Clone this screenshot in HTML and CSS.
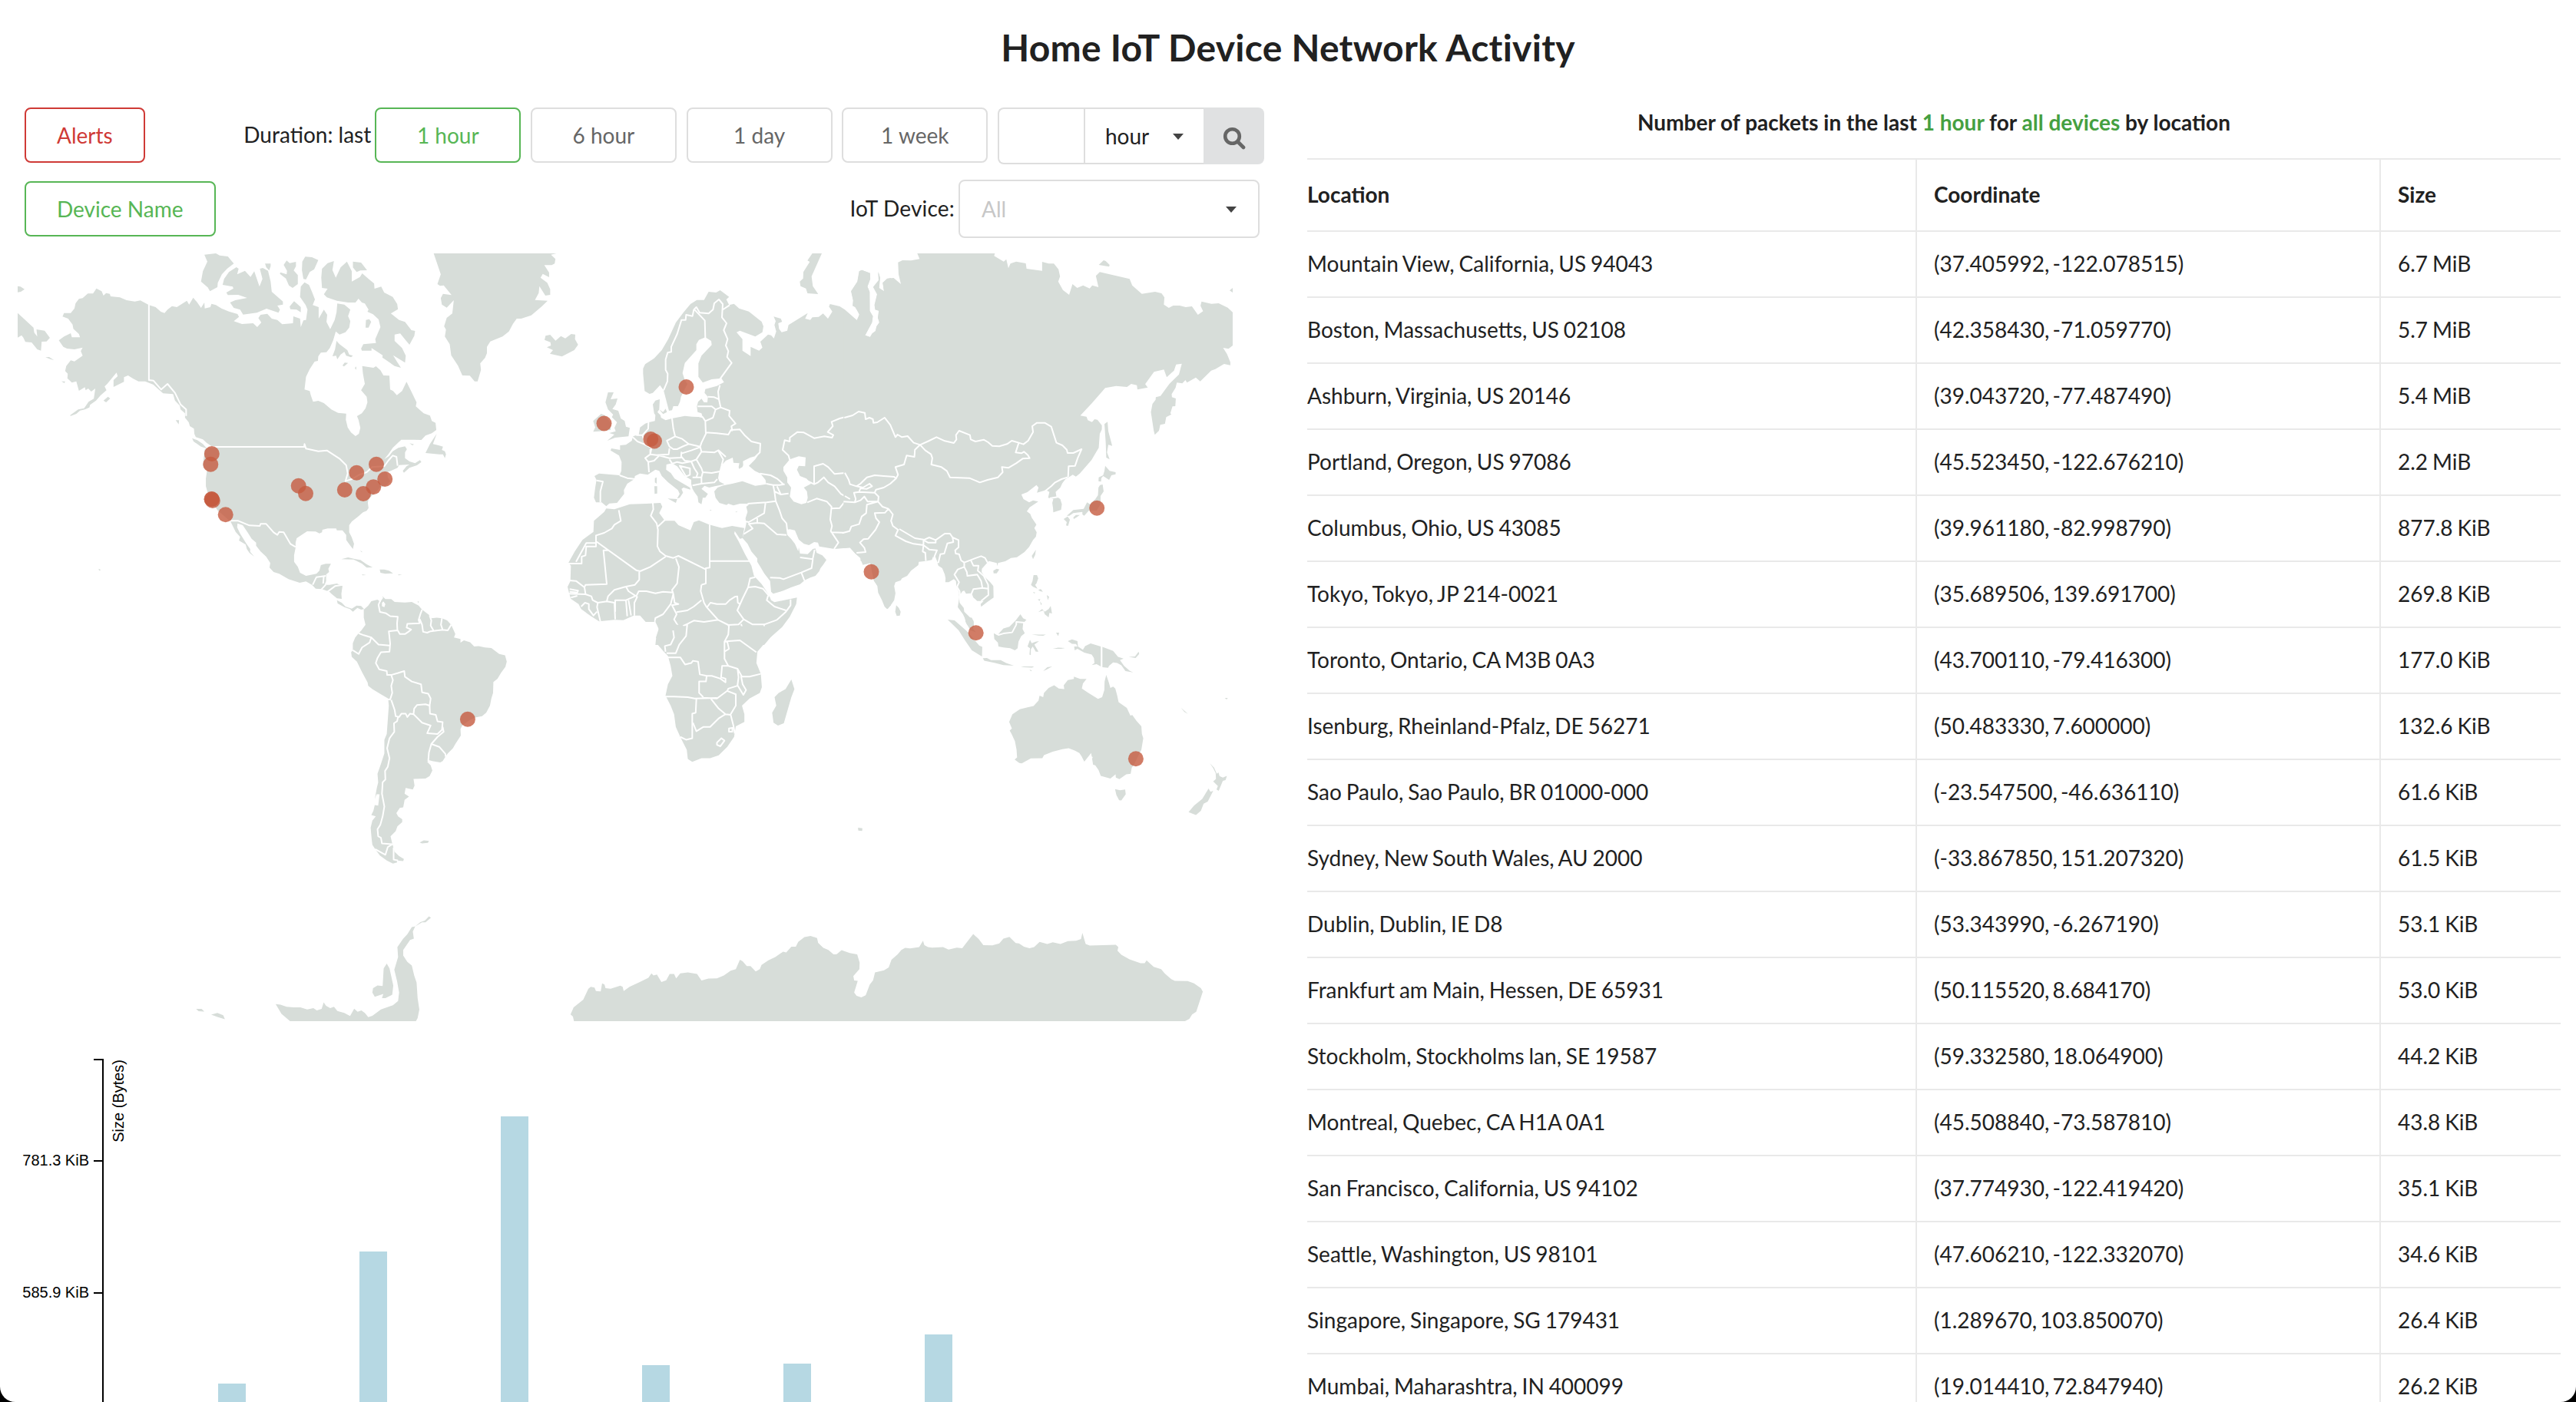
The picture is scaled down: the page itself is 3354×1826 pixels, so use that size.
FILE: index.html
```html
<!DOCTYPE html>
<html lang="en">
<head>
<meta charset="utf-8">
<title>Home IoT Device Network Activity</title>
<link rel="stylesheet" href="styles.css">
</head>
<body>
<main class="page">
<h1 class="title">Home IoT Device Network Activity</h1>
<div class="columns">
<section class="left">
<div class="controls">
<button class="btn red">Alerts</button>
<div class="group">
<span class="label">Duration: last</span>
<div class="durations">
<button class="btn wide green">1 hour</button>
<button class="btn wide">6 hour</button>
<button class="btn wide">1 day</button>
<button class="btn wide">1 week</button>
<div class="custom">
<div class="amount"></div>
<div class="unit">hour<svg class="caret" viewBox="0 0 14 8"><path d="M0 0H14L7 8Z"/></svg></div>
<div class="search"><svg width="30" height="30" viewBox="0 0 30 30"><circle cx="12.5" cy="12.5" r="9.3"/><path d="M19.5 19.5L27 27"/></svg></div>
</div>
</div>
</div>
</div>
<div class="controls second">
<button class="btn green">Device Name</button>
<div class="group">
<span class="label">IoT Device:</span>
<div class="select">All<svg class="caret" viewBox="0 0 14 8"><path d="M0 0H14L7 8Z"/></svg></div>
</div>
</div>
<svg class="map" viewBox="23 330 1582 1000">
<!-- North America and Greenland -->
<g transform="translate(0 320) scale(.4847 .33333)">
<g class="land">
<path d="M259,167 273,178 278,195 285,185 295,188 297,198 322,202 340,213 362,218 377,214 400,232 418,240 432,258 442,263 450,250 462,236 475,240 488,228 502,215 508,230 519,203 530,222 540,243 549,222 550,245 565,240 568,227 580,232 595,245 615,257 638,267 642,278 628,295 650,306 680,303 691,318 702,300 694,283 700,270 718,266 730,285 745,290 758,307 787,303 788,276 806,285 808,318 815,292 822,290 826,250 821,232 806,200 808,160 818,143 830,153 838,180 846,210 840,232 856,240 856,285 870,250 879,270 877,298 887,326 899,290 904,260 906,226 925,230 941,250 935,275 941,295 938,320 928,338 912,347 902,335 895,370 886,400 877,416 862,418 855,432 854,450 845,453 832,482 822,512 818,562 832,568 835,585 841,610 855,606 870,615 890,640 908,653 930,656 929,680 934,710 943,730 955,744 964,735 968,712 963,680 959,666 972,655 982,635 987,612 985,590 970,565 980,540 975,500 973,470 1003,477 1010,471 1022,487 1030,507 1046,508 1048,562 1056,568 1066,584 1080,568 1092,532 1105,570 1119,612 1117,628 1138,655 1155,664 1160,685 1170,692 1172,720 1160,733 1143,742 1132,759 1110,758 1078,758 1068,772 1055,790 1043,815 1032,835 1045,822 1055,803 1070,790 1088,784 1093,795 1088,808 1088,830 1100,843 1115,850 1128,838 1132,845 1120,858 1100,868 1085,887 1082,880 1092,862 1100,855 1072,857 1068,868 1050,880 1040,884 1042,905 1048,920 1040,935 1020,945 1015,955 1005,970 1000,975 990,990 988,1005 990,1025 985,1036 975,1042 962,1058 945,1078 938,1092 938,1120 945,1140 951,1165 948,1185 940,1170 930,1150 930,1130 920,1112 905,1112 903,1105 880,1105 866,1110 865,1120 858,1124 848,1117 825,1116 810,1130 797,1143 794,1160 794,1180 790,1210 790,1235 800,1255 806,1278 822,1290 850,1282 858,1270 862,1248 875,1243 889,1243 882,1262 884,1275 876,1285 876,1310 872,1325 885,1325 905,1320 920,1330 917,1360 918,1380 905,1378 890,1360 885,1352 865,1342 848,1340 838,1325 822,1312 805,1317 775,1303 750,1282 735,1275 724,1258 726,1240 715,1215 700,1195 688,1172 688,1160 676,1145 665,1120 652,1092 638,1085 637,1100 645,1125 655,1148 662,1165 672,1185 672,1196 683,1215 670,1200 663,1185 660,1168 642,1152 645,1138 633,1118 627,1100 620,1080 605,1060 585,1035 578,1020 558,965 553,940 553,910 556,880 545,860 550,795 570,785 555,770 545,757 526,748 522,735 521,715 510,705 507,690 497,672 497,655 485,640 483,625 470,605 465,580 438,577 425,560 412,543 390,530 372,530 358,520 344,507 333,514 333,532 305,552 305,525 316,510 313,496 302,515 288,540 281,550 286,565 270,585 258,605 242,622 240,632 228,640 215,644 205,657 190,665 188,663 210,640 226,635 238,610 252,598 256,558 245,570 237,558 230,565 228,553 212,567 205,530 193,535 181,518 182,500 175,490 178,470 190,448 200,452 222,430 217,412 222,398 200,405 180,402 170,395 158,370 172,355 190,342 193,358 215,358 212,345 197,325 195,308 183,285 168,277 172,263 190,263 200,245 203,225 212,208 222,205 236,187 250,187Z"/>
<path d="M549,35 580,30 590,38 612,42 628,70 610,90 596,112 585,145 584,162 564,178 558,163 540,140 545,100 557,62Z"/>
<path d="M635,84 641,90 637,112 658,98 673,122 683,100 697,160 705,130 698,90 706,87 720,98 727,140 730,180 760,218 760,230 745,234 752,250 748,262 716,246 690,262 653,269 645,250 628,243 618,222 632,213 664,204 640,192 612,193 608,183 627,167 625,160 598,153 602,130 615,103Z"/>
<path d="M712,70 727,70 727,80 723,97 715,84ZM770,58 778,68 795,63 795,80 789,97 800,115 800,150 786,165 776,155 768,128 752,110 753,104 770,112 771,98 762,75ZM820,43 838,45 855,56 844,92 832,103 822,132 815,130 811,95 812,62Z"/>
<path d="M865,90 880,68 897,60 893,95 902,125 915,85 932,62 945,100 945,140 967,122 973,108 990,130 1005,148 1006,168 1024,160 1032,183 1055,200 1067,228 1069,248 1050,265 1072,290 1088,298 1105,330 1115,333 1113,352 1100,387 1090,370 1075,343 1060,347 1060,372 1080,400 1090,430 1088,457 1056,428 1065,450 1077,477 1060,470 1035,445 1027,437 1028,428 998,400 998,410 972,410 970,402 976,385 1010,380 1008,365 1022,318 1017,288 1002,268 987,258 990,250 980,226 972,222 963,207 955,222 935,222 905,215 878,202 870,190 880,168 865,165 863,125Z"/>
<path d="M948,62 970,66 986,96 968,97 958,103 948,85ZM790,217 808,240 808,260 797,250 780,248 778,238ZM983,290 992,287 997,298 990,320 982,320ZM904,372 912,385 933,408 938,425 948,430 943,436 930,430 925,415 915,425 906,444 903,430 893,432 900,405ZM920,468 926,457 935,458 924,472ZM953,478 957,472 957,485Z"/>
<path d="M1173,735 1163,775 1178,780 1190,785 1187,798 1195,803 1198,815 1195,830 1190,815 1180,815 1143,810 1155,775ZM472,682 481,682 480,698ZM516,752 530,760 545,775 556,793 540,785 520,765ZM278,605 290,590 296,597 285,612ZM265,1262 271,1267 266,1270ZM1100,772 1112,776 1108,780Z"/>
<path d="M47,263 60,280 90,320 92,340 100,355 98,327 120,332 134,360 125,374 112,375 110,410 100,405 85,378 68,376 63,360 58,350 47,360ZM47,158 55,160 66,170 56,180 47,182ZM122,436 132,435 145,447 135,443ZM165,530 175,530 173,537Z"/>
<path d="M1165,30 1495,30 1480,35 1492,52 1490,70 1482,76 1462,76 1475,105 1475,123 1458,110 1452,125 1470,145 1478,170 1478,192 1465,195 1449,158 1447,185 1437,212 1471,215 1455,238 1427,272 1400,285 1388,285 1378,305 1367,335 1350,355 1317,374 1308,395 1308,420 1303,438 1290,460 1292,485 1283,530 1275,530 1262,508 1242,507 1230,468 1212,428 1208,385 1195,355 1198,328 1193,315 1200,282 1215,265 1219,213 1200,242 1187,230 1184,205 1190,188 1213,193 1192,155 1182,157 1175,150 1184,112Z"/>
<path d="M917,1225 935,1218 955,1225 968,1228 985,1245 1001,1257 985,1258 972,1242 950,1226ZM1020,1265 1032,1265 1045,1270 1056,1280 1035,1282 1022,1278ZM972,1284 984,1287 974,1288ZM1070,1284 1080,1286 1070,1288ZM905,1385 918,1395 928,1410 945,1418 958,1406 970,1408 978,1420 970,1422 960,1415 948,1430 940,1420 925,1412 907,1398ZM968,1190 974,1198 970,1196Z"/>
</g>
<g class="border">
<path d="M400,228 400,525 412,527 433,562 450,540 470,575 485,620 500,640 500,665M560,786 817,786 818,775 822,793 855,803 878,800 912,832 930,858 934,890 928,920 945,912 965,895 985,885 1000,865 1032,862 1043,840 1055,820 1065,825 1068,860M610,1075 640,1075 670,1093 698,1095 700,1087 715,1087 735,1120 745,1130 750,1118 762,1120 780,1165 794,1177"/>
<path d="M840,1325 850,1295 875,1290M870,1290 868,1320M862,1345 875,1325M880,1352 900,1330 920,1325"/>
</g>
</g>
<!-- Europe, northern Africa and the Middle East -->
<g transform="translate(700 320) scale(.33333)">
<g class="land">
<path d="M412,480 420,463 455,440 485,408 510,365 540,300 570,260 597,228 622,212 650,212 668,180 697,183 713,174 748,200 737,210 748,232 767,227 787,245 825,257 875,297 882,315 878,338 850,355 790,332 777,338 800,365 800,410 832,431 832,395 865,410 878,398 870,375 900,347 912,350 923,362 932,335 925,310 930,295 922,277 950,285 955,297 940,303 943,325 953,338 975,332 980,310 1055,263 1045,285 1065,290 1073,280 1098,278 1115,265 1134,285 1151,257 1138,238 1142,228 1180,237 1200,250 1248,292 1257,268 1240,240 1231,235 1233,212 1225,178 1250,140 1257,100 1267,95 1298,107 1299,130 1288,160 1297,180 1297,255 1309,277 1305,300 1279,350 1298,357 1320,335 1325,315 1335,300 1330,282 1333,255 1319,250 1317,232 1327,190 1312,160 1333,135 1331,102 1338,125 1334,165 1353,178 1348,145 1365,130 1380,126 1380,1405 1365,1420 1355,1410 1345,1385 1330,1355 1327,1330 1313,1308 1305,1270 1300,1240 1270,1247 1260,1220 1240,1202 1220,1180 1160,1185 1100,1175 1095,1160 1080,1158 1060,1170 1040,1165 1020,1148 1005,1112 985,1108 972,1110 975,1130 990,1145 1005,1165 1015,1187 1018,1195 1020,1178 1025,1203 1055,1205 1075,1185 1085,1183 1090,1200 1112,1210 1128,1228 1115,1247 1105,1260 1100,1272 1085,1290 1065,1297 1043,1307 1025,1323 990,1335 960,1348 920,1360 912,1352 908,1310 885,1280 870,1255 858,1235 858,1222 835,1195 820,1165 803,1145 800,1142 805,1125 812,1100 815,1085 812,1065 820,1040 815,1020 825,1012 818,1008 790,1008 765,1015 745,1008 738,1013 710,1005 695,985 690,960 703,945 725,937 760,930 800,920 850,938 893,932 890,915 870,890 848,880 825,860 850,835 860,820 830,828 802,842 803,857 800,865 787,872 785,865 788,850 765,848 762,828 735,840 715,862 708,890 705,908 710,922 730,932 692,940 670,945 652,938 640,950 665,970 655,985 645,985 640,1010 628,1003 625,980 612,962 605,950 600,930 600,915 575,900 545,862 525,850 503,855 502,875 520,888 535,910 560,925 595,945 597,953 570,945 562,950 568,965 555,985 545,988 555,970 548,955 510,925 485,900 475,880 460,875 445,885 430,895 400,890 380,900 378,912 350,930 337,955 338,970 310,1005 280,1007 268,1018 250,1003 228,1003 220,985 225,945 230,915 222,900 240,890 320,897 327,880 328,845 318,820 285,800 288,792 322,798 322,780 345,778 368,762 372,745 395,738 400,710 420,695 435,690 458,685 460,662 455,655 450,620 460,605 477,600 475,640 468,650 480,662 482,672 500,682 525,675 575,665 605,668 645,670 640,655 625,650 622,628 627,610 640,598 650,612 663,612 665,590 652,575 655,560 700,548 728,533 718,518 680,522 645,535 628,512 628,460 640,430 680,388 678,372 655,358 630,368 620,385 620,408 575,458 566,498 575,525 585,540 560,590 556,610 548,627 530,627 525,643 513,645 492,565 478,545 450,575 437,579 418,568 412,500Z"/>
<path d="M1073,30 1110,30 1070,120 1075,158 1096,189 1054,186 1048,167 1027,158 1024,140 1037,128 1038,103 1063,63 1054,58Z"/>
<path d="M27,368 31,352 49,348 70,371 91,353 108,362 131,345 147,347 146,365 158,387 143,408 95,433 48,422 60,408 36,397 52,390 50,377Z"/>
<path d="M275,573 297,573 285,600 312,597 305,620 292,638 315,645 325,675 340,685 345,707 360,712 355,745 325,748 303,750 272,762 300,738 280,732 305,725 300,712 310,690 290,670 295,660 275,640 265,612ZM217,685 248,657 262,662 285,690 285,720 240,725 217,727 225,710ZM458,908 465,905 465,930 458,925ZM456,940 467,940 467,968 457,970ZM508,988 545,990 540,1005ZM475,640 490,650 500,637 505,650 490,658ZM672,1032 680,1033 675,1036ZM772,1040 782,1037 776,1042Z"/>
<path d="M268,1027 300,1030 360,1010 425,1008 480,1005 487,1020 475,1045 497,1075 535,1075 550,1092 597,1112 610,1080 630,1073 670,1090 720,1103 760,1095 807,1103 800,1143 790,1145 770,1115 768,1125 785,1155 810,1205 835,1250 845,1290 875,1322 895,1352 905,1368 912,1385 925,1393 1013,1375 1010,1400 985,1450 955,1490 910,1530 885,1560 460,1560 462,1540 470,1520 473,1495 460,1470 422,1470 400,1445 375,1445 335,1463 300,1462 240,1468 205,1445 170,1420 160,1400 130,1380 123,1358 117,1333 128,1310 130,1250 120,1240 145,1195 175,1150 218,1118 220,1075 260,1040Z"/>
</g>
<path class="water" d="M960,865 985,835 1020,823 1047,827 1045,862 1020,860 1013,875 1025,900 1050,910 1068,930 1040,945 1052,960 1055,985 1050,1005 1030,1010 1000,1000 985,980 990,945 975,925 975,905 960,880Z"/>
<g class="border">
<path d="M492,565 507,530 508,500 500,485 500,445 508,418 522,415 522,395 545,345 562,290 578,290 580,270 605,275 610,250 620,240 633,262 668,265 685,250 690,225 708,210 723,228 720,280 738,303 727,330 742,365 735,390 745,412 740,435 758,458 713,520M613,250 653,292 655,360M720,252 750,232"/>
<path d="M712,545 705,570 708,600 715,632 750,645 748,665 765,685 773,695 757,705 760,725M665,590 690,592 708,600M625,628 680,628 695,640 715,632M695,640 685,672 655,685M605,660 645,670 655,685 657,735 640,770 635,785M657,730 700,733 745,738 755,720 790,718 808,740 835,765 870,773 868,808 850,825"/>
<path d="M525,675 530,715 537,745 505,762 515,785 530,795 545,795 570,783 590,775 565,755 537,745M590,775 635,785M562,812 600,800 635,787M440,815 465,818 512,815 515,792M440,795 440,815 420,830 432,845 455,840 475,820 515,830 560,828 562,805M635,785 640,805 620,835 600,843 575,840 562,825M640,805 690,808 705,800 725,835 718,860M705,798 735,825M645,885 680,888 712,882M620,835 640,870 645,885 640,905M525,852 545,845 565,850 600,843 612,870 625,890 620,905M555,860 595,870 595,895 580,902ZM605,937 640,930 690,925 702,912M605,905 625,905 640,905 640,928"/>
<path d="M368,745 390,765 415,775 445,790 440,815M432,845 435,885M320,897 350,908 382,912M230,917 255,922 245,960 245,1003M433,690 432,715 410,740 385,740M410,740 418,775M515,835 525,850"/>
<path d="M868,890 910,897 935,910 960,932M893,930 920,935 945,935 965,932M920,935 925,960 950,972 980,968M935,940 950,972M820,1008 860,1005 895,1003 930,998 925,960M930,998 945,1035 955,1065 972,1085 975,1112M890,1005 885,1045 825,1080 812,1078M858,1065 858,1083 825,1087 840,1105 805,1127M858,1083 885,1085 935,1128 972,1130M908,1297 945,1298 960,1303 1030,1277 1042,1308M1030,1277 1070,1260 1075,1225 1025,1218M1075,1222 1082,1188"/>
<path d="M985,838 980,820 957,798 965,760 985,765 985,750 1015,728 1040,730 1080,752 1120,745 1150,750 1155,740 1133,728 1153,705 1148,688 1180,675 1230,662 1255,648 1280,655 1283,678 1310,692 1355,672M1080,930 1080,862 1115,852 1135,865 1160,892 1200,888 1220,905 1220,932 1245,942M1045,915 1080,932 1095,925 1118,905 1135,925 1160,940 1185,970 1222,990M1053,1003 1090,988 1130,1000 1148,1020 1143,1070 1150,1095 1145,1115 1175,1160 1158,1185M1148,1027 1180,1025 1200,1000 1245,1000M1145,1120 1218,1122"/>
<path d="M317,1033 325,1075 300,1090 290,1105 260,1122 228,1132 228,1175 190,1175 187,1210 172,1215 172,1242 120,1242M228,1162 190,1162 150,1235M228,1155 385,1268 400,1272M275,1190 257,1190 270,1322 187,1325 183,1335M397,1272 397,1305 380,1325 345,1332M400,1272 440,1255 500,1215M450,1005 452,1030 442,1055 465,1085 470,1110 468,1175 478,1195 500,1212 530,1220 550,1212 657,1265M497,1072 470,1097M672,1090 672,1258 657,1260 657,1320 640,1325M672,1232 828,1232M540,1222 552,1255 545,1320 525,1345 530,1360M345,1332 355,1350 385,1370 395,1350 425,1350 460,1358 490,1352 530,1355M530,1360 520,1400 505,1420 490,1440 460,1455 458,1470M530,1360 535,1395 550,1400 525,1405 543,1440 533,1460 550,1487 553,1502"/>
<path d="M543,1432 585,1425 610,1410 640,1385M640,1325 637,1350 650,1395 660,1412 685,1440 705,1462M660,1415 675,1395 700,1400 735,1400 750,1385 770,1372 780,1370 782,1395 790,1400M553,1502 570,1485 585,1478 610,1465 650,1470 705,1462 745,1482M850,1295 830,1300 822,1335 800,1380 780,1425 805,1460M822,1335 850,1332 880,1340 905,1370M745,1482 785,1480 805,1460 840,1480 885,1480 883,1545M885,1480 935,1462 970,1430 988,1405 988,1382M900,1368 895,1385 925,1410 970,1425M795,1478 803,1505 790,1540 825,1560M745,1482 745,1510 735,1555M735,1550 790,1542M473,1500 553,1502M527,1503 530,1560M585,1478 575,1530 555,1560M490,1500 490,1518 468,1518"/>
<path d="M187,1360 183,1335 150,1310 125,1308M120,1360 187,1362 210,1370 215,1385 235,1395 232,1412 245,1468M125,1342 158,1348 155,1355 125,1352M270,1390 275,1370 300,1345 345,1332M235,1395 270,1390 300,1395 303,1460M303,1430 303,1385 345,1385 350,1448M355,1385 365,1445M378,1445 378,1395 390,1370M345,1385 380,1370M130,1375 155,1368M170,1410 185,1395 200,1400 200,1420 218,1445 232,1430"/>
</g>
</g>
<!-- Russia, Central and East Asia -->
<g transform="translate(1100 320) scale(.338 .33333)">
<g class="land">
<path d="M-5,250 0,253 45,293 56,270 42,240 30,235 32,215 24,178 48,140 55,100 65,95 97,107 98,130 87,160 95,180 96,255 108,275 105,300 78,350 97,357 105,343 118,333 122,315 133,300 127,282 131,252 117,250 114,232 124,190 109,162 130,135 128,102 135,125 131,168 151,178 146,145 163,128 188,126 216,150 207,112 205,65 222,57 255,58 288,52 279,30 578,30 575,40 612,62 622,53 630,88 638,70 660,62 697,69 700,90 760,98 760,63 785,70 805,70 823,92 829,120 822,140 840,173 864,192 877,150 895,165 918,155 943,167 953,155 977,162 967,118 982,103 1097,130 1107,155 1144,188 1195,180 1220,186 1231,202 1229,230 1248,243 1265,234 1290,234 1313,240 1337,237 1360,270 1380,256 1370,235 1374,218 1412,227 1440,225 1475,242 1494,260 1494,390 1478,403 1457,399 1472,423 1485,455 1485,467 1461,462 1427,482 1411,488 1369,530 1352,515 1318,535 1312,525 1300,538 1279,535 1274,555 1259,580 1260,592 1275,597 1273,627 1262,628 1254,655 1258,659 1238,670 1233,696 1215,700 1210,723 1194,739 1190,723 1179,650 1185,618 1197,602 1198,592 1216,587 1250,540 1287,503 1298,461 1276,464 1268,488 1240,514 1229,484 1191,493 1157,541 1167,554 1127,562 1125,545 1103,540 1087,552 1045,548 1003,556 950,617 907,664 931,668 936,682 952,689 962,678 973,680 990,702 990,718 982,735 978,790 970,803 950,838 905,890 890,902 878,895 862,905 850,912 838,928 830,945 812,962 815,980 830,990 836,1010 833,1032 803,1042 802,1025 799,1005 803,990 783,985 788,962 775,955 750,962 740,965 746,945 738,935 703,963 680,972 688,990 710,1003 725,995 745,1000 712,1022 701,1038 714,1048 720,1063 738,1090 730,1103 739,1120 736,1137 725,1150 710,1177 692,1197 663,1217 640,1220 618,1233 590,1240 588,1252 585,1240 555,1232 545,1243 528,1262 527,1275 540,1295 560,1315 572,1330 573,1375 548,1393 525,1411 523,1400 535,1388 510,1388 495,1375 490,1362 483,1358 467,1360 460,1348 453,1350 440,1370 442,1395 458,1415 460,1430 485,1455 495,1465 497,1485 490,1500 470,1480 462,1455 455,1440 435,1412 440,1380 440,1355 430,1330 428,1310 420,1303 400,1315 387,1315 388,1300 385,1285 375,1260 360,1250 357,1240 350,1225 340,1215 335,1228 312,1232 285,1235 283,1248 255,1270 240,1290 220,1300 215,1308 195,1315 190,1330 195,1358 190,1385 180,1400 165,1420 155,1410 145,1382 132,1355 127,1330 113,1310 105,1270 98,1240 78,1245 60,1230 62,1220 38,1200 20,1180 -5,1182Z"/>
<path d="M1012,688 1015,725 1030,782 1015,778 1010,808 1020,835 1007,828 1005,770 1000,697ZM978,75 997,57 1005,60 1020,75 1018,82ZM1482,175 1494,165 1494,183ZM1003,860 1020,880 1043,885 1043,893 1027,897 1018,915 995,900 988,908 987,922 977,920 978,905 995,897 1000,880ZM983,935 993,933 997,960 985,978 985,1010 970,1035 940,1035 922,1055 915,1050 915,1040 880,1045 865,1055 855,1055 880,1033 920,1028 933,1003 945,1010 965,990 975,975 977,945ZM843,1068 858,1058 867,1070 860,1095 852,1093 855,1080ZM880,1062 890,1052 905,1052 895,1060 882,1068Z"/>
<path d="M736,1188 733,1208 725,1225 720,1212ZM572,1270 585,1262 595,1265 585,1280 573,1280ZM198,1405 208,1415 215,1430 212,1445 200,1447 194,1430ZM727,1287 740,1287 745,1300 738,1320 733,1325 742,1340 725,1333 717,1325 723,1310ZM770,1430 785,1420 793,1408 798,1437 788,1435 785,1452 770,1440 765,1425 745,1432 760,1420ZM745,1345 755,1342 763,1352 752,1350ZM778,1365 787,1372 782,1385ZM743,1382 753,1381 750,1388ZM752,1390 759,1400 755,1404ZM725,1353 735,1356 728,1358Z"/>
</g>
<g class="border">
<path d="M-2,672 30,663 53,648 77,653 80,678 95,672 108,678 110,692 125,690 153,672 175,700 195,748 203,738 220,748 242,744 265,770 290,778 325,762 353,748 385,763 420,771 430,757 428,740 440,723 482,740 485,757 503,765 535,758 552,768 568,782 595,784 625,775 643,762 670,770 688,776 706,762 725,728 722,705 740,692 770,692 795,707 815,770 838,780 855,797 858,810 880,810 912,795 897,830 887,860 862,862 860,905M290,778 310,800 332,815 337,830 333,855 372,865 393,880 405,905 480,908 520,925 550,915 590,905 608,885 605,865 630,868 660,850 685,832 712,830 705,818 690,805 680,811 658,808 670,770"/>
<path d="M290,778 270,797 268,825 238,820 228,855 195,865 205,895 197,910 190,903 150,900 115,897 85,905 60,930 45,940 20,932 15,915 0,887M197,910 175,930 150,945 120,953 115,965 130,980 128,1000 145,1020 168,1028M45,940 70,945 95,930 105,940 85,950 60,948 55,962 115,965M55,962 35,965 42,990 38,1003 60,995 75,980 88,1000 128,1000 85,1012 82,1045 65,1058 55,1088 25,1097 18,1115 -10,1123M-5,1000 38,1003M0,978 20,990"/>
<path d="M168,1028 155,1043 115,1045 120,1065 133,1080 118,1110 90,1145 72,1147 58,1160 75,1180 80,1197 45,1200M168,1028 185,1050 178,1075 185,1095 205,1110 195,1133 235,1155 265,1165 303,1170 303,1148 270,1143 240,1125 210,1107M303,1150 325,1140 350,1150 350,1160 320,1160ZM350,1150 385,1125 405,1125 415,1140 438,1150 438,1178 425,1190 427,1203 440,1205 448,1230 460,1238M303,1170 300,1195 310,1200 312,1232M303,1170 325,1187 355,1190 345,1215 355,1240M415,1140 418,1158 395,1163 383,1203 368,1205 360,1240"/>
<path d="M460,1238 485,1228 500,1222 525,1213 540,1220 550,1238M460,1238 460,1255 435,1265 422,1285 440,1315 432,1333 442,1350 445,1375M460,1255 470,1275 472,1290 510,1285 525,1310 530,1337 495,1342 487,1362M485,1228 495,1250 515,1250 512,1270 535,1290 552,1325 553,1365 525,1388M530,1337 552,1340M770,960 795,940 810,925 835,912 858,905M790,987 820,982"/>
</g>
</g>
<!-- South America, southern Africa and western Antarctica -->
<g transform="translate(400 760) scale(.44643 .3699)">
<g class="land">
<path d="M165,92 178,78 187,62 205,57 214,65 220,45 228,55 245,55 255,65 285,67 305,65 325,78 335,92 355,110 362,122 378,120 393,122 408,130 420,145 432,178 428,190 447,195 447,208 457,200 475,207 487,222 500,220 518,225 537,227 560,248 577,253 582,275 578,293 565,315 555,335 543,347 542,385 537,405 533,430 522,455 510,467 490,472 475,480 452,500 447,512 448,535 432,565 425,580 410,598 404,608 395,625 388,630 365,625 355,622 350,628 360,640 365,658 357,678 345,687 310,688 313,712 308,725 287,720 284,740 297,750 284,762 280,788 270,790 260,808 265,820 277,830 277,840 263,855 258,872 243,890 248,915 255,945 268,960 282,970 280,977 262,975 262,982 250,986 232,975 212,958 198,935 190,920 188,900 185,860 190,835 200,820 187,815 193,800 197,780 207,782 211,742 202,742 197,760 203,720 207,700 205,670 215,635 225,598 225,550 232,530 235,480 238,430 236,405 215,390 190,372 178,360 176,348 160,312 145,275 130,258 128,242 133,235 133,210 140,190 150,175 158,165 170,145 165,120ZM328,912 340,904 355,906 352,913 335,915ZM322,62 326,64 323,68Z"/>
<path d="M1015,130 1025,160 1017,190 1022,215 1040,240 1052,255 1060,290 1065,325 1052,355 1045,395 1060,430 1070,460 1075,505 1088,540 1107,585 1110,618 1123,628 1150,615 1175,615 1200,605 1225,575 1245,540 1250,503 1275,487 1275,460 1268,430 1290,405 1320,385 1326,365 1323,318 1310,280 1313,240 1345,195 1385,150 1415,90 1350,150 1100,150ZM1412,338 1421,372 1412,400 1390,492 1373,500 1360,490 1356,455 1368,430 1363,400 1375,385 1395,372Z"/>
<path d="M-92,1481 -78,1483 -60,1490 -40,1492 -20,1492 0,1500 18,1495 28,1503 42,1498 48,1475 55,1487 67,1495 78,1490 88,1505 108,1512 125,1523 137,1497 147,1508 158,1503 168,1512 178,1527 190,1522 215,1500 250,1485 265,1470 268,1440 262,1400 254,1360 265,1315 263,1280 280,1250 292,1235 305,1210 315,1207 308,1225 311,1250 300,1255 280,1290 280,1310 292,1332 305,1345 312,1380 319,1405 322,1460 327,1500 322,1530 317,1541 -50,1541 -75,1515ZM232,1338 240,1355 251,1415 248,1448 228,1460 218,1460 222,1445 197,1455 190,1440 192,1425 205,1415 220,1417 223,1355ZM355,1172 361,1177 345,1193 335,1193 315,1207 330,1192 343,1187Z"/>
<path d="M-324,1498 -308,1498 -300,1507 -317,1506ZM-280,1518 -262,1512 -245,1520 -240,1534 -262,1526Z"/>
<path d="M778,1541 775,1525 768,1517 777,1492 805,1465 820,1427 827,1420 838,1423 842,1435 856,1436 860,1408 867,1412 870,1425 885,1427 913,1416 920,1420 923,1435 940,1420 970,1403 995,1388 1004,1373 1010,1380 1020,1377 1033,1403 1047,1397 1057,1375 1070,1375 1076,1390 1088,1373 1110,1369 1137,1375 1150,1398 1170,1391 1195,1390 1215,1380 1235,1363 1250,1358 1262,1325 1270,1330 1282,1347 1293,1347 1308,1366 1320,1358 1325,1343 1345,1327 1365,1315 1388,1296 1397,1299 1412,1279 1425,1279 1432,1262 1450,1245 1468,1241 1487,1248 1490,1265 1505,1283 1520,1290 1535,1306 1548,1305 1560,1291 1560,1541Z"/>
</g>
<path class="water" d="M218,68 222,63 228,72 225,83 218,80Z"/>
<g class="border">
<path d="M220,48 213,60 208,75 212,100 230,105 242,115 264,117 262,140 263,165 238,168 242,212 240,240 215,242 205,262 200,280 210,302 232,308 233,322 245,322 265,315 283,308 285,328 305,345 332,355 335,383 353,388 360,405 357,430 345,425 320,428 312,440 310,460 300,458 292,470 287,458 275,458 268,470 258,467 255,445 245,410M264,165 270,178 285,178 295,170 303,162 290,155 292,142 328,140 325,128 330,108 335,92M328,125 335,145 338,170 350,173 360,168 395,163 410,165 420,145M357,112 362,130 360,148 368,165M393,122 390,145 395,163"/>
<path d="M150,175 165,182 187,190 208,215 240,218M187,190 182,208 160,225 150,248 133,235M245,322 250,340 245,360 248,385 242,408 234,408M357,430 358,458 375,462 380,485 395,488 393,515 380,530 350,527 360,500 335,490 310,460M395,505 398,522 380,540 362,565 385,575 403,600 404,610M362,565 355,595 353,625M265,470 262,485 253,492 254,522 240,545 233,580 240,615 235,645 227,660 228,690 220,700 218,740 225,785 220,820 213,850 205,865 207,890 215,895 218,915 248,918 235,928 228,955 198,935M252,930 252,972 265,975"/>
<path d="M1067,165 1070,190 1060,215 1043,220 1045,240M1108,148 1105,185 1085,215 1075,245 1048,245M1052,260 1088,260 1102,285 1120,280 1125,272 1140,275 1145,320 1165,325 1163,345 1143,345 1143,385 1155,400M1165,325 1180,325 1205,335 1220,348 1220,335 1207,330 1210,290 1228,290 1255,300 1268,328 1290,328 1323,318M1230,148 1228,180 1217,205 1217,265 1228,290M1217,205 1230,203 1262,200 1310,242M1217,240 1230,230 1225,205M1255,300 1258,330 1255,358 1272,392 1280,375 1270,355 1265,325M1255,360 1228,370 1225,378 1195,405 1155,402M1225,378 1250,390 1250,430 1235,460M1045,398 1070,398 1110,400 1130,405 1195,403M1135,405 1133,455 1123,458 1123,545 1105,550 1088,540M1125,490 1135,520 1155,505 1175,505 1200,475 1220,460 1235,462 1243,500 1247,528M1177,405 1200,440 1220,460M1230,510 1240,508 1240,522 1230,522ZM1195,560 1208,545 1217,553 1205,573 1195,568Z"/>
</g>
</g>
<!-- Oceania and eastern Antarctica -->
<g transform="translate(1060 760) scale(.35714 .3699)">
<g class="land">
<path d="M723,460 750,443 778,436 800,431 818,412 822,395 835,400 838,385 855,368 875,358 892,370 912,372 910,358 925,340 947,336 947,328 970,336 993,336 980,352 976,370 1000,385 1035,406 1050,400 1058,375 1059,345 1065,322 1075,350 1080,368 1090,363 1098,370 1105,395 1110,418 1140,438 1153,465 1160,463 1175,483 1193,503 1195,530 1200,545 1193,585 1180,610 1165,640 1158,648 1154,670 1138,672 1113,689 1100,683 1099,672 1080,687 1045,677 1037,657 1025,640 1017,638 1010,597 985,627 975,608 967,597 950,588 928,580 905,583 870,592 838,604 832,615 790,616 757,633 748,632 731,620 740,612 738,585 732,555 720,530 713,518 721,510 711,487ZM1097,724 1115,728 1134,725 1136,742 1120,764 1112,763 1102,745Z"/>
<path d="M1443,633 1458,648 1468,670 1474,665 1478,678 1490,683 1505,677 1500,692 1490,695 1475,730 1467,725 1472,713 1455,697 1465,688 1464,668 1455,650ZM1438,722 1445,733 1455,730 1435,768 1420,775 1410,800 1392,815 1365,805 1385,782 1415,758ZM160,860 176,862 175,871 161,870ZM1337,437 1363,459 1350,452ZM1497,403 1508,403 1504,408Z"/>
<path d="M925,203 940,197 960,203 962,222 980,233 988,220 1008,211 1045,222 1045,292 1030,284 1012,287 1022,280 1020,262 1012,250 985,243 960,230 950,235 948,222 960,222 955,213 940,212ZM1051,223 1090,237 1108,258 1128,264 1115,270 1130,290 1150,307 1163,313 1135,308 1120,288 1105,280 1090,278 1075,290 1072,297 1051,295ZM1147,258 1170,257 1183,240 1185,248 1172,262Z"/>
<path d="M655,175 668,182 690,158 712,152 735,130 752,108 762,122 774,128 762,140 760,160 768,175 755,185 745,205 742,228 732,235 715,228 690,225 672,222 670,208 657,195ZM787,198 793,210 808,205 820,203 803,215 818,240 808,240 797,222 790,232 790,252 785,250 787,228 778,222ZM793,179 820,180 845,180 835,184 818,183ZM487,127 512,130 560,170 590,205 602,218 613,223 612,257 600,250 575,235 550,200 527,165ZM550,118 575,120 582,135 580,160 590,172 570,165 552,135ZM615,263 630,262 645,270 680,270 700,280 728,289 690,287 660,280 620,272ZM753,292 775,292 802,292 795,296 765,295ZM835,308 850,295 868,292 848,303ZM785,303 794,306 790,309ZM882,173 893,173 890,185ZM870,230 890,226 915,227 900,230Z"/>
<path d="M0,1245 10,1250 13,1265 32,1283 48,1290 65,1306 80,1307 100,1291 130,1301 157,1306 166,1335 165,1358 143,1382 146,1398 159,1399 146,1440 155,1452 172,1457 188,1450 203,1412 215,1397 222,1369 255,1362 272,1352 282,1325 305,1305 318,1290 332,1283 350,1285 383,1280 397,1258 402,1273 415,1280 430,1282 470,1280 490,1289 520,1282 540,1284 555,1265 580,1234 600,1252 617,1273 650,1274 675,1267 690,1250 712,1244 735,1266 747,1267 765,1279 785,1284 802,1280 822,1262 850,1269 870,1263 898,1269 925,1259 955,1258 973,1252 978,1230 990,1269 1005,1275 1100,1272 1109,1280 1106,1293 1120,1307 1150,1323 1190,1337 1205,1337 1212,1327 1238,1350 1265,1358 1278,1373 1302,1393 1315,1399 1362,1400 1385,1408 1410,1425 1417,1437 1410,1458 1393,1508 1378,1517 1368,1533 1352,1541 0,1541Z"/>
</g>
<path class="border" d="M658,172 672,181 690,176 722,172 737,145 737,135 768,138M1005,632 1013,610"/>
</g>
<g class="markers">
<circle cx="275.8" cy="591" r="10"/><circle cx="274.3" cy="604.7" r="10"/><circle cx="275.5" cy="650" r="10"/><circle cx="275.8" cy="650.3" r="10"/><circle cx="276.8" cy="652" r="10"/><circle cx="293.7" cy="670.3" r="10"/><circle cx="388.7" cy="632.7" r="10"/><circle cx="398" cy="642.7" r="10"/><circle cx="448.8" cy="638" r="10"/><circle cx="464.3" cy="615.7" r="10"/><circle cx="490" cy="604.7" r="10"/><circle cx="501.2" cy="624" r="10"/><circle cx="486.2" cy="634.3" r="10"/><circle cx="473" cy="643" r="10"/><circle cx="893.5" cy="504" r="10"/><circle cx="786.5" cy="551.5" r="10"/><circle cx="847.3" cy="572" r="10"/><circle cx="852" cy="574.5" r="10"/><circle cx="1134.5" cy="744.8" r="10"/><circle cx="1428.2" cy="661.7" r="10"/><circle cx="1270.7" cy="824.3" r="10"/><circle cx="608.9" cy="936.8" r="10"/><circle cx="1478.9" cy="988.2" r="10"/>
</g>
</svg>
<svg class="chart" viewBox="0 1330 1650 496">
<path class="axis" d="M122 1380H134V1830M122 1512H134M122 1684H134"/>
<text x="116" y="1518" text-anchor="end">781.3 KiB</text>
<text x="116" y="1690" text-anchor="end">585.9 KiB</text>
<text transform="translate(161 1380) rotate(-90)" text-anchor="end">Size (Bytes)</text>
<g class="bars"><rect x="284" y="1802" width="36" height="30"/><rect x="468" y="1630" width="36" height="200"/><rect x="652" y="1454" width="36" height="380"/><rect x="836" y="1778" width="36" height="50"/><rect x="1020" y="1776" width="36" height="54"/><rect x="1204" y="1738" width="36" height="90"/></g>
</svg>
</section>
<section class="right">
<h2 class="caption">Number of packets in the last <em>1 hour</em> for <em>all devices</em> by location</h2>
<table>
<thead><tr><th class="c1">Location</th><th class="c2">Coordinate</th><th>Size</th></tr></thead>
<tbody>
<tr><td>Mountain View, California, US 94043</td><td>(37.405992, -122.078515)</td><td>6.7 MiB</td></tr>
<tr><td>Boston, Massachusetts, US 02108</td><td>(42.358430, -71.059770)</td><td>5.7 MiB</td></tr>
<tr><td>Ashburn, Virginia, US 20146</td><td>(39.043720, -77.487490)</td><td>5.4 MiB</td></tr>
<tr><td>Portland, Oregon, US 97086</td><td>(45.523450, -122.676210)</td><td>2.2 MiB</td></tr>
<tr><td>Columbus, Ohio, US 43085</td><td>(39.961180, -82.998790)</td><td>877.8 KiB</td></tr>
<tr><td>Tokyo, Tokyo, JP 214-0021</td><td>(35.689506, 139.691700)</td><td>269.8 KiB</td></tr>
<tr><td>Toronto, Ontario, CA M3B 0A3</td><td>(43.700110, -79.416300)</td><td>177.0 KiB</td></tr>
<tr><td>Isenburg, Rheinland-Pfalz, DE 56271</td><td>(50.483330, 7.600000)</td><td>132.6 KiB</td></tr>
<tr><td>Sao Paulo, Sao Paulo, BR 01000-000</td><td>(-23.547500, -46.636110)</td><td>61.6 KiB</td></tr>
<tr><td>Sydney, New South Wales, AU 2000</td><td>(-33.867850, 151.207320)</td><td>61.5 KiB</td></tr>
<tr><td>Dublin, Dublin, IE D8</td><td>(53.343990, -6.267190)</td><td>53.1 KiB</td></tr>
<tr><td>Frankfurt am Main, Hessen, DE 65931</td><td>(50.115520, 8.684170)</td><td>53.0 KiB</td></tr>
<tr><td>Stockholm, Stockholms lan, SE 19587</td><td>(59.332580, 18.064900)</td><td>44.2 KiB</td></tr>
<tr><td>Montreal, Quebec, CA H1A 0A1</td><td>(45.508840, -73.587810)</td><td>43.8 KiB</td></tr>
<tr><td>San Francisco, California, US 94102</td><td>(37.774930, -122.419420)</td><td>35.1 KiB</td></tr>
<tr><td>Seattle, Washington, US 98101</td><td>(47.606210, -122.332070)</td><td>34.6 KiB</td></tr>
<tr><td>Singapore, Singapore, SG 179431</td><td>(1.289670, 103.850070)</td><td>26.4 KiB</td></tr>
<tr><td>Mumbai, Maharashtra, IN 400099</td><td>(19.014410, 72.847940)</td><td>26.2 KiB</td></tr>
</tbody>
</table>
</section>
</div>
</main>
</body>
</html>
```
FILE: styles.css
```css
* { box-sizing: border-box; }
html { background: #000; overflow: hidden; }
body {
  margin: 0;
  font-family: Lato, "Liberation Sans", sans-serif;
  font-size: 28px;
  color: #212121;
  overflow: hidden;
}
.page {
  width: 3354px;
  height: 1826px;
  overflow: hidden;
  background: #fff;
  border-radius: 0 0 20px 20px;
}
.title {
  margin: 0;
  height: 126px;
  line-height: 124px;
  font-size: 48px;
  font-weight: 700;
  letter-spacing: .25px;
  text-align: center;
}
.columns { display: flex; }
.left { width: 1702px; flex: none; padding-top: 14px; }
.right { width: 1632px; flex: none; }

.controls {
  display: flex;
  justify-content: space-between;
  align-items: flex-start;
  width: 1646px;
  height: 94px;
  padding-left: 32px;
}
.controls.second { width: 1640px; height: 96px; }
.group { display: flex; align-items: flex-start; gap: 5px; }
.label { line-height: 70px; }
.second .label, .second > .btn { margin-top: 2px; }
.second .label { letter-spacing: .2px; }
.durations { display: flex; align-items: flex-start; gap: 12.7px; }
.btn {
  height: 72px;
  padding: 0 40px 1px;
  border: 2px solid #dedede;
  border-radius: 8px;
  background: #fff;
  color: #666;
  font: inherit;
  line-height: 66px;
}
.btn.wide { width: 190px; padding: 0 0 1px; }
.btn.red { border-color: #cf3a36; color: #cf3a36; }
.btn.green { border-color: #57b655; color: #57b655; }

.custom { display: flex; width: 347px; height: 74px; line-height: 70px; }
.amount {
  width: 112px;
  border: 2px solid #dedede;
  border-right: 0;
  border-radius: 8px 0 0 8px;
}
.unit {
  display: flex;
  align-items: center;
  justify-content: space-between;
  width: 156px;
  padding: 0 26px 1px;
  border: 2px solid #dedede;
  border-right: 0;
}
.caret { width: 14px; height: 8px; fill: #444; margin-top: 2px; }
.search {
  display: flex;
  align-items: center;
  justify-content: center;
  flex: 1;
  background: #e0e1e2;
  border-radius: 0 8px 8px 0;
}
.search svg { margin-top: 5px; fill: none; stroke: #666; stroke-width: 4.6; stroke-linecap: round; }
.select {
  display: flex;
  align-items: center;
  justify-content: space-between;
  width: 392px;
  height: 76px;
  padding: 0 28px 1px;
  border: 2px solid #dedede;
  border-radius: 8px;
  color: #c7c7c7;
}

.map { display: block; width: 1582px; height: 1000px; margin-left: 23px; }
.land { fill: #d7ddd9; }
.water { fill: #fff; }
.border { fill: none; stroke: #fff; }
.border, .border path { stroke-width: 2px; stroke-linejoin: round; vector-effect: non-scaling-stroke; }
.markers { fill: #c65b40; fill-opacity: .8; }

.chart { display: block; width: 1650px; height: 496px; font: 20px "Liberation Sans", Arial, sans-serif; }
.axis { fill: none; stroke: #000; stroke-width: 2; }
.bars { fill: #b6d8e3; }

.caption {
  margin: 0;
  height: 80px;
  line-height: 67px;
  font-size: 28px;
  font-weight: 700;
  text-align: center;
}
.caption em { font-style: normal; color: #45a041; }
table {
  width: 1632px;
  table-layout: fixed;
  border-collapse: separate;
  border-spacing: 0;
  border-top: 2px solid #e9e9e9;
}
th, td {
  height: 86px;
  padding: 0 22px 2px;
  border-bottom: 2px solid #e9e9e9;
  text-align: left;
  white-space: nowrap;
}
th { height: 94px; }
td { word-spacing: -1.3px; }
td:nth-child(2) { word-spacing: -3px; }
th + th, td + td { border-left: 2px solid #e9e9e9; }
th:first-child, td:first-child { padding-left: 0; }
.c1 { width: 792px; }
.c2 { width: 604px; }
```
